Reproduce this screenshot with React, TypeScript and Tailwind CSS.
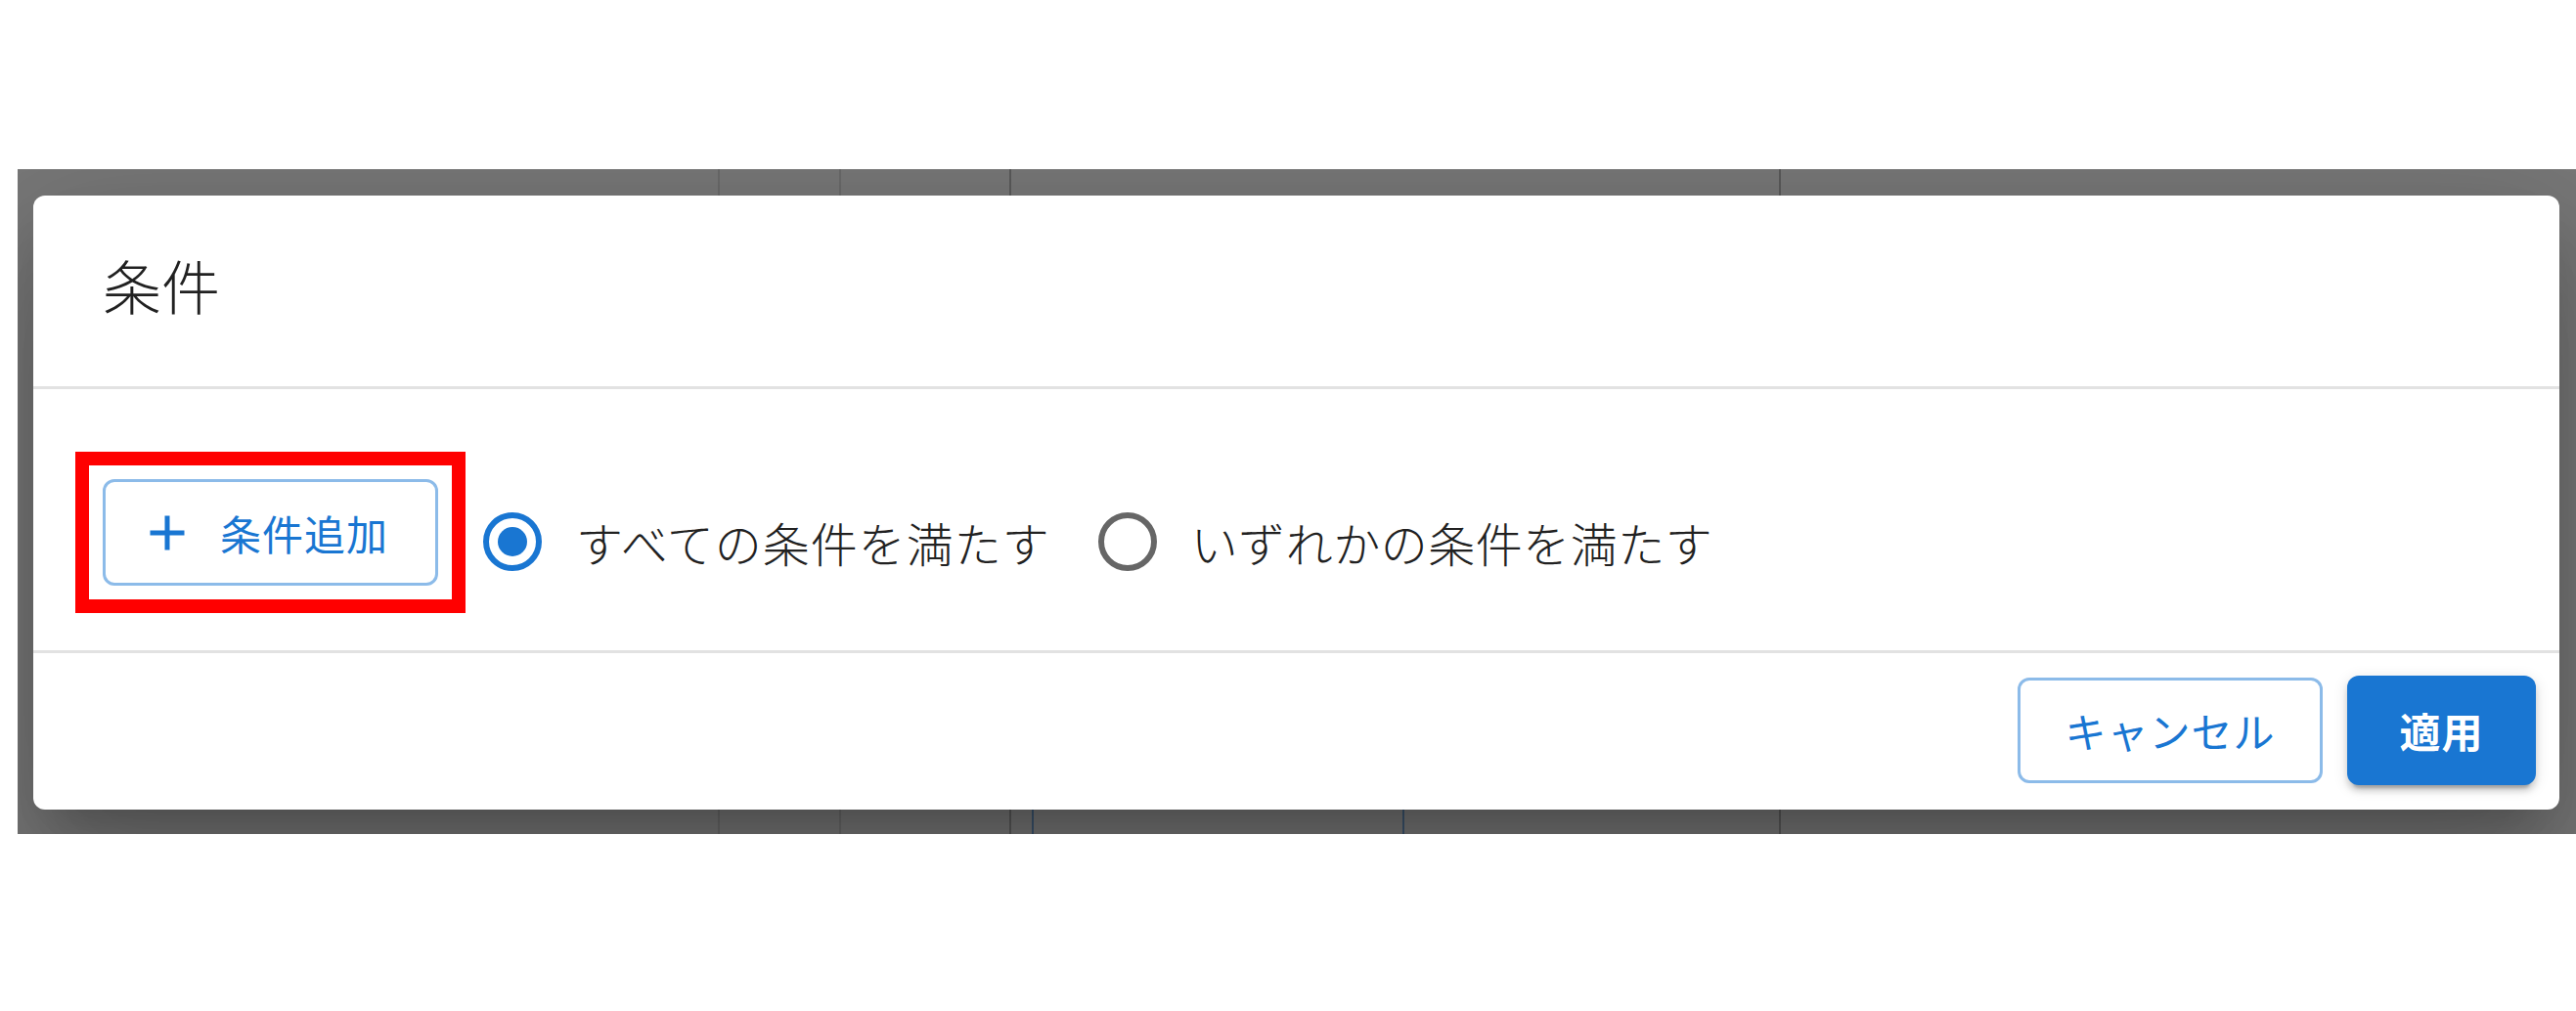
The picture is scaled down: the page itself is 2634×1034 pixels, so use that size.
import React from "react";

const font = "font-['Noto_Sans_CJK_JP','Noto_Sans',sans-serif]";

function RadioIcon({ checked }: { checked: boolean }) {
  return (
    <svg viewBox="0 0 24 24" className="w-[72px] h-[72px] shrink-0">
      <circle
        cx="12"
        cy="12"
        r="9"
        fill="none"
        strokeWidth="2"
        stroke={checked ? "#1976d2" : "#666666"}
      />
      {checked && <circle cx="12" cy="12" r="5" fill="#1976d2" />}
    </svg>
  );
}

export default function App() {
  return (
    <div className={`min-h-screen bg-white pt-[173px] pl-[18px] ${font}`}>
      <div className="relative overflow-hidden h-[680px] bg-[#787878]">
        {/* page behind the backdrop */}
        <div className="absolute inset-0">
          <div className="absolute top-0 bottom-0 left-[716px] w-[2px] bg-[#6a6a6a]" />
          <div className="absolute top-0 bottom-0 left-[840px] w-[2px] bg-[#6a6a6a]" />
          <div className="absolute top-0 bottom-0 left-[1014px] w-[2px] bg-[#5a5a5a]" />
          <div className="absolute top-0 bottom-0 left-[1801px] w-[2px] bg-[#5a5a5a]" />
          <div className="absolute top-[630px] h-[80px] left-[1037px] w-[381px] border-x-2 border-[#3d5670] rounded-t-[14px]" />
        </div>

        <div className="relative pt-[27px] pl-[16px] pr-[17px]">
          <div className="bg-white rounded-[12px] h-[628px] flex flex-col shadow-[0_33px_45px_-21px_rgba(0,0,0,0.2),0_72px_114px_9px_rgba(0,0,0,0.14),0_27px_138px_24px_rgba(0,0,0,0.12)]">
            <div className="h-[195px] shrink-0 flex items-center pl-[71px] pb-[14px]">
              <h2 className="text-[60px] leading-none font-light text-[#212121]">条件</h2>
            </div>

            <div className="h-[273px] shrink-0 border-y-[3px] border-[#e2e2e2] flex items-start pl-[43px] pt-[64px]">
              <div className="border-[14px] border-[#ff0000] p-[14px]">
                <button className="w-[343px] h-[109px] border-[3px] border-[#8cbbe9] rounded-[12px] flex items-center pl-[33px] text-[#1976d2]">
                  <svg viewBox="0 0 24 24" className="w-[60px] h-[60px] fill-current">
                    <path d="M19 13h-6v6h-2v-6H5v-2h6V5h2v6h6v2z" />
                  </svg>
                  <span className="ml-[24px] text-[42px] leading-none tracking-[1px]">条件追加</span>
                </button>
              </div>

              <label className="ml-[12px] mt-[56px] flex items-center">
                <RadioIcon checked />
                <span className="ml-[29px] text-[48px] leading-none font-light tracking-[1px] text-[#212121]">
                  すべての条件を満たす
                </span>
              </label>

              <label className="ml-[43px] mt-[56px] flex items-center">
                <RadioIcon checked={false} />
                <span className="ml-[29px] text-[48px] leading-none font-light tracking-[0.5px] text-[#212121]">
                  いずれかの条件を満たす
                </span>
              </label>
            </div>

            <div className="flex-1 flex items-center justify-end gap-[25px] pr-[24px] pb-[2px]">
              <button className="w-[312px] h-[108px] border-[3px] border-[#8cbbe9] rounded-[12px] text-[#1976d2] text-[42px] leading-none tracking-[1px]">
                キャンセル
              </button>
              <button className="w-[193px] h-[112px] bg-[#1976d2] rounded-[12px] text-white text-[42px] font-bold leading-none tracking-[1px] shadow-[0_9px_3px_-6px_rgba(0,0,0,0.2),0_6px_6px_0_rgba(0,0,0,0.14),0_3px_15px_0_rgba(0,0,0,0.12)]">
                適用
              </button>
            </div>
          </div>
        </div>
      </div>
    </div>
  );
}
